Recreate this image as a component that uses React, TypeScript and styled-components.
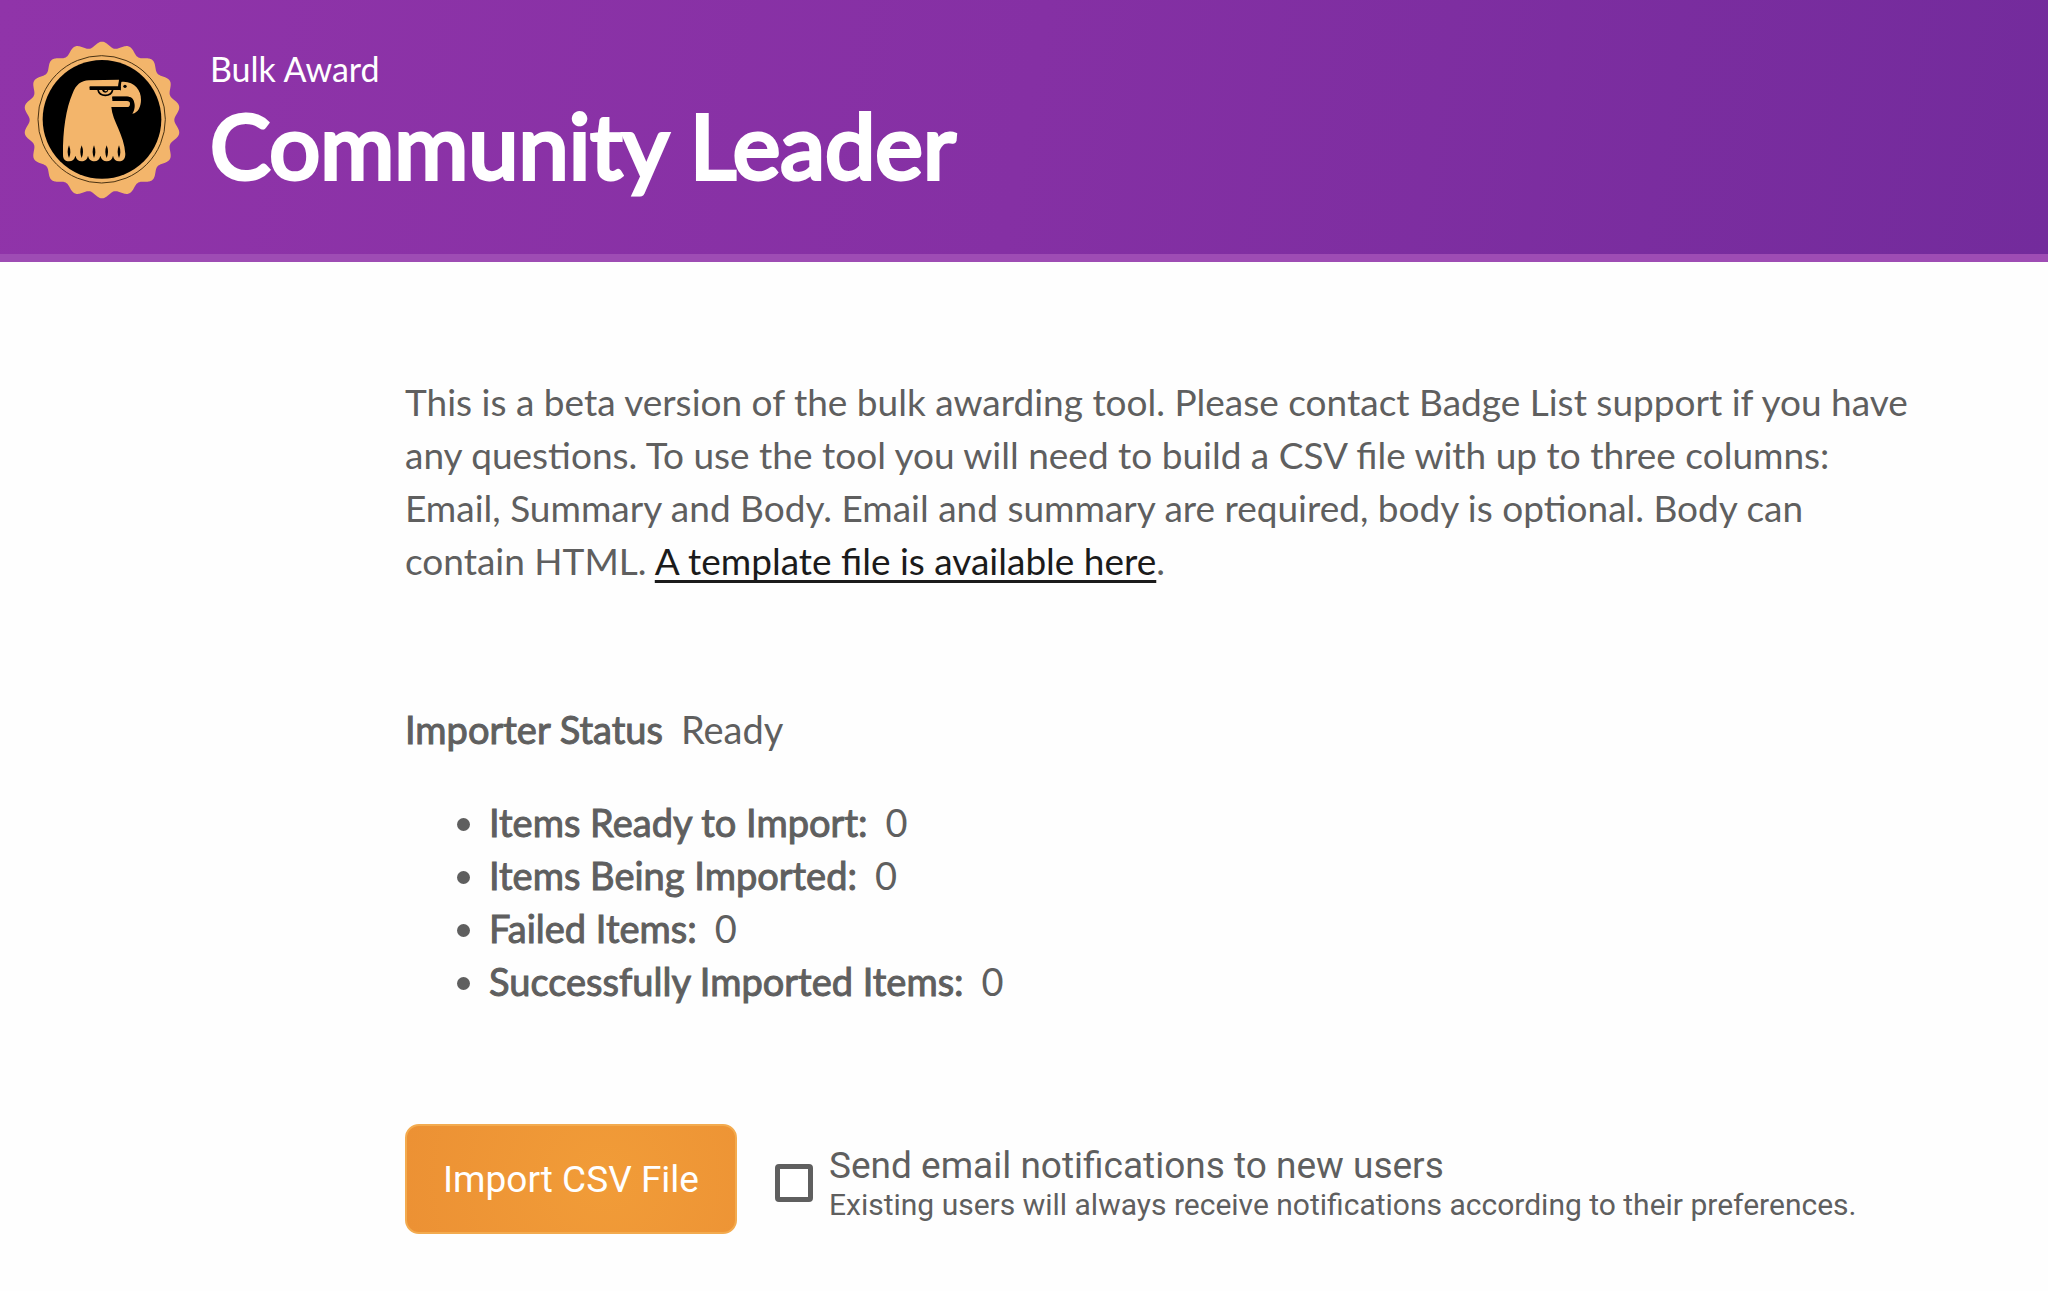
import React from "react";
import styled, { createGlobalStyle } from "styled-components";

const GlobalStyle = createGlobalStyle`
  *, *::before, *::after { box-sizing: border-box; }
  body {
    margin: 0;
    background: #fefefe;
    color: #5f5f5f;
    font-family: Lato, "Liberation Sans", sans-serif;
    font-size: 37px;
    line-height: 53px;
  }
`;

const Header = styled.header`
  display: flex;
  align-items: flex-start;
  gap: 30px;
  padding: 42px 24px 55px;
  color: #fff;
  background: linear-gradient(100deg, #9034a9 0%, #8530a4 50%, #732b9c 100%);
  border-bottom: 8px solid #9e4cb4;
`;

const Badge = styled.svg`
  flex: none;
  width: 156px;
  height: 156px;
  overflow: visible;
`;

const Titles = styled.div`
  display: flex;
  flex-direction: column;
  padding-top: 7px;
`;

const Kicker = styled.p`
  margin: 0;
  font-size: 34px;
  line-height: 40px;
`;

const Title = styled.h1`
  margin: 0;
  font-size: 90px;
  line-height: 110px;
  font-weight: 400;
  -webkit-text-stroke: 4px currentColor;
`;

const Main = styled.main`
  padding: 113px 132px 56px 405px;
`;

const Intro = styled.p`
  margin: 0 0 116px;
`;

const TemplateLink = styled.a`
  color: #1b1b1b;
  text-decoration: underline;
  text-decoration-thickness: 3px;
  text-underline-offset: 5px;
  text-decoration-skip-ink: none;
`;

const Status = styled.p`
  margin: 0 0 40px;
  font-size: 38px;
`;

const Label = styled.strong`
  margin-right: 18px;
  font-weight: 400;
  -webkit-text-stroke: 1px currentColor;
`;

const Counts = styled.ul`
  margin: 0 0 116px;
  padding-left: 84px;
  font-size: 38px;
`;

const Actions = styled.form`
  display: flex;
  align-items: center;
  gap: 38px;
  font-family: Roboto, "Liberation Sans", sans-serif;
`;

const ImportButton = styled.button`
  flex: none;
  padding: 0 36px;
  height: 110px;
  border: 2px solid #f3ab4f;
  border-radius: 14px;
  background: radial-gradient(circle at 60% 50%, #f19c38, #ec9134);
  color: #fff;
  font: inherit;
`;

const Option = styled.label`
  display: flex;
  align-items: center;
  gap: 16px;
  padding-top: 8px;
`;

const Tick = styled.input`
  appearance: none;
  flex: none;
  width: 38px;
  height: 38px;
  margin: 0;
  border: 5px solid #5f5f5f;
  border-radius: 4px;
  background: #fff;
`;

const OptionText = styled.span`
  display: flex;
  flex-direction: column;
  line-height: 43px;
`;

const Hint = styled.small`
  font-size: 30px;
  line-height: 36px;
`;

const counts = [
  { label: "Items Ready to Import:", value: 0 },
  { label: "Items Being Imported:", value: 0 },
  { label: "Failed Items:", value: 0 },
  { label: "Successfully Imported Items:", value: 0 },
];

const GOLD = "#f3b56b";
const LOBES = 18;
const CENTER = { x: 306, y: 301 };

// Scalloped rim of the seal: a circle whose radius swells once per lobe.
const rim = Array.from({ length: 720 }, (_, i) => {
  const angle = (i * Math.PI) / 360;
  const radius = 226 + 9 * Math.cos(LOBES * angle);
  const x = CENTER.x + radius * Math.sin(angle);
  const y = CENTER.y - radius * Math.cos(angle);
  return `${x.toFixed(1)},${y.toFixed(1)}`;
}).join(" ");

function EagleBadge() {
  return (
    <Badge viewBox="72 67 468 468" role="img" aria-label="Community Leader badge">
      <polygon points={rim} fill={GOLD} />
      <circle cx="305" cy="299" r="191" fill="none" stroke="#4a3212" strokeWidth="3" />
      <circle cx="306" cy="299" r="178" fill="#000" />
      <g transform="translate(165 165)">
        <path
          fill={GOLD}
          d="M24 240 C23 170 33 100 53 56 C63 30 78 18 102 17 L192 15 L189 40 L197 48 L197 22 C235 17 259 45 258 75 C258 95 250 114 232 117 C240 105 240 92 238 85 C236 72 230 66 215 66 L172 66 L172 79 L216 79 Q225 79 225 87 Q225 97 216 97 L169 97 C172 140 208 180 211 238 C211 254 202 260 192 260 C183 260 176 254 174 243 C172 254 165 260 155 260 C146 260 139 254 136 243 C134 254 127 260 118 260 C109 260 101 254 99 243 C97 254 89 260 80 260 C71 260 64 254 61 243 C59 254 52 260 42 260 C31 260 24 254 24 240 Z"
        />
        <path d="M172 69 H216 Q231 69 233 86 Q233 94 229 99" fill="none" stroke="#000" strokeWidth="7" />
        <path d="M104 38 H193 L196 19" fill="none" stroke="#000" strokeWidth="7" />
        <path d="M104 37 H197 V46 H104 Z" fill="#000" />
        <path d="M129 46 Q133 62 151 62 Q169 62 173 46" fill="none" stroke="#000" strokeWidth="5" />
        <path d="M141 46 H160 Q158 54 151 54 Q143 54 141 46 Z" fill="#000" />
        <path d="M148 46 H157 Q156 50 152 50 Q149 50 148 46 Z" fill={GOLD} />
        <circle cx="210" cy="35" r="5" fill="#000" />
        {[42, 80, 117, 155, 192].map((x) => (
          <path key={x} d={`M${x} 212 Q${x + 8} 232 ${x} 250 Q${x - 8} 232 ${x} 212 Z`} fill="#000" />
        ))}
      </g>
    </Badge>
  );
}

export default function App() {
  return (
    <>
      <GlobalStyle />
      <Header>
        <EagleBadge />
        <Titles>
          <Kicker>Bulk Award</Kicker>
          <Title>Community Leader</Title>
        </Titles>
      </Header>
      <Main>
        <Intro>
          This is a beta version of the bulk awarding tool. Please contact Badge List support if you
          have any questions. To use the tool you will need to build a CSV file with up to three
          columns: Email, Summary and Body. Email and summary are required, body is optional. Body
          can contain HTML. <TemplateLink href="#template">A template file is available here</TemplateLink>.
        </Intro>
        <Status>
          <Label>Importer Status</Label>
          Ready
        </Status>
        <Counts>
          {counts.map((item) => (
            <li key={item.label}>
              <Label>{item.label}</Label>
              {item.value}
            </li>
          ))}
        </Counts>
        <Actions>
          <ImportButton type="button">Import CSV File</ImportButton>
          <Option>
            <Tick type="checkbox" />
            <OptionText>
              Send email notifications to new users
              <Hint>Existing users will always receive notifications according to their preferences.</Hint>
            </OptionText>
          </Option>
        </Actions>
      </Main>
    </>
  );
}
